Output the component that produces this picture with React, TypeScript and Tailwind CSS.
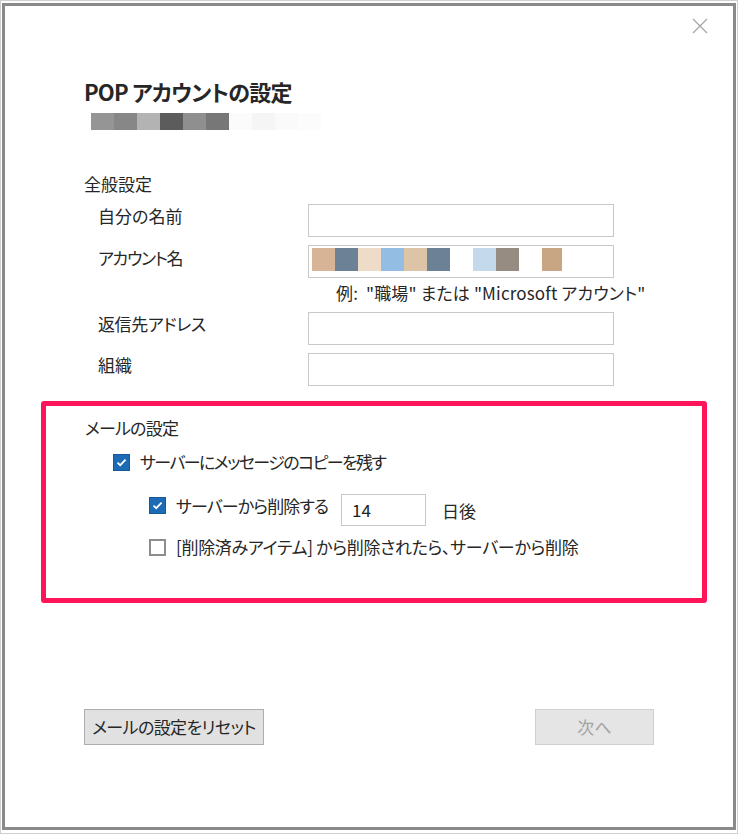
import React from "react";

const blur = ["#959595", "#878787", "#b3b3b3", "#5c5c5c", "#8f8f8f", "#777777", "#fbfbfb", "#f5f5f5", "#fafafa", "#fcfcfc"];
const acct = ["#d8b496", "#6d8196", "#efdcc8", "#93bde3", "#dec4a6", "#6d8196", "transparent", "#c5d9ec", "#968c82", "transparent", "#c8a684"];

function Checked() {
  return (
    <div className="w-[17px] h-[17px] bg-[#1c6bb4] border border-[#15599a] flex items-center justify-center shrink-0">
      <svg width="11" height="9" viewBox="0 0 11 9" fill="none">
        <path d="M1.5 4.6 L4.2 7.2 L9.6 1.6" stroke="#ffffff" strokeWidth="1.8" />
      </svg>
    </div>
  );
}

function Unchecked() {
  return <div className="w-[17px] h-[17px] bg-white border-2 border-[#8d8d8d] shrink-0" />;
}

function Field({ children }: { children?: React.ReactNode }) {
  return (
    <div className="w-[306px] h-[33px] border border-[#c8c8c8] bg-white flex items-start pl-[3px] pt-[1px] shrink-0">
      {children}
    </div>
  );
}

export default function App() {
  return (
    <div
      className="w-[738px] h-[834px] bg-white border border-[#d0d0d0] flex text-[#262626] [font-feature-settings:'palt'] overflow-hidden"
      style={{ fontFamily: '"Noto Sans CJK JP", "Noto Sans", sans-serif' }}
    >
      <div className="flex-1 mt-[2px] ml-[1px] mr-[1px] mb-[3px] border-[3px] border-[#8a8a8a] flex flex-col">
        {/* close */}
        <div className="flex justify-end pr-[25px] pt-[12px]">
          <svg width="16" height="16" viewBox="0 0 16 16">
            <path d="M1 1 L15 15 M15 1 L1 15" stroke="#a6a6a6" strokeWidth="1.3" />
          </svg>
        </div>

        <div className="pl-[79px] flex flex-col">
          <div className="mt-[42px] h-[30px] leading-[30px] text-[22px] font-bold tracking-[-0.8px]">POP アカウントの設定</div>
          <div className="mt-[7px] ml-[7px] flex h-[17px]">
            {blur.map((c, i) => (
              <div key={i} className="w-[23px] h-[17px]" style={{ backgroundColor: c }} />
            ))}
          </div>

          <div className="mt-[42px] h-[24px] leading-[24px] text-[17px]">全般設定</div>

          <div className="mt-[8px] flex">
            <div className="w-[210px] ml-[14px] h-[24px] leading-[24px] text-[17px]">自分の名前</div>
            <Field />
          </div>

          <div className="mt-[8px] flex">
            <div className="w-[210px] ml-[14px] mt-[1px] h-[24px] leading-[24px] text-[17px] tracking-[-1.3px]">アカウント名</div>
            <Field>
              <div className="flex mt-[1px]">
                {acct.map((c, i) => (
                  <div key={i} className={i === 10 ? "w-[20px] h-[23px]" : "w-[23px] h-[23px]"} style={{ backgroundColor: c }} />
                ))}
              </div>
            </Field>
          </div>

          <div className="mt-[3px] ml-[252px] h-[24px] leading-[24px] text-[17px] whitespace-nowrap tracking-[0.15px]">
            例:&nbsp;&nbsp;"職場" または "Microsoft アカウント"
          </div>

          <div className="mt-[7px] flex">
            <div className="w-[210px] ml-[14px] h-[24px] leading-[24px] text-[17px] tracking-[-0.4px]">返信先アドレス</div>
            <Field />
          </div>

          <div className="mt-[8px] flex">
            <div className="w-[210px] ml-[14px] h-[24px] leading-[24px] text-[17px]">組織</div>
            <Field />
          </div>

          {/* highlighted mail settings */}
          <div className="mt-[15px] ml-[-43px] w-[666px] border-[5px] border-[#fe1458] rounded-[3px] flex flex-col pt-[10px] pb-[39px] pl-[39px]">
            <div className="h-[24px] leading-[24px] text-[17px] tracking-[-0.8px]">メールの設定</div>

            <div className="mt-[10px] ml-[28px] h-[24px] flex items-center gap-[10px]">
              <Checked />
              <span className="text-[17px] leading-[24px] whitespace-nowrap tracking-[-1.6px]">サーバーにメッセージのコピーを残す</span>
            </div>

            <div className="mt-[20px] ml-[64px] flex items-start">
              <div className="mt-[3px]">
                <Checked />
              </div>
              <span className="ml-[10px] w-[165px] text-[17px] leading-[24px] whitespace-nowrap tracking-[-0.9px]">サーバーから削除する</span>
              <div className="w-[85px] h-[32px] border border-[#c8c8c8] bg-white pl-[10px] text-[17px] leading-[30px] text-[#222]">14</div>
              <span className="ml-[16px] mt-[5px] text-[17px] leading-[24px]">日後</span>
            </div>

            <div className="mt-[9px] ml-[64px] h-[24px] flex items-center gap-[10px]">
              <Unchecked />
              <span className="text-[17px] leading-[24px] whitespace-nowrap tracking-[-0.3px]">[削除済みアイテム] から削除されたら、サーバーから削除</span>
            </div>
          </div>
        </div>

        <div className="mt-[106px] px-[79px] flex justify-between">
          <div className="w-[180px] h-[36px] bg-[#e1e1e1] border border-[#adadad] flex items-center justify-center text-[17px] whitespace-nowrap tracking-[-0.6px]">
            メールの設定をリセット
          </div>
          <div className="w-[119px] h-[36px] bg-[#e5e5e5] border border-[#cfcfcf] flex items-center justify-center text-[17px] text-[#a3a3a3]">
            次へ
          </div>
        </div>
      </div>
    </div>
  );
}
